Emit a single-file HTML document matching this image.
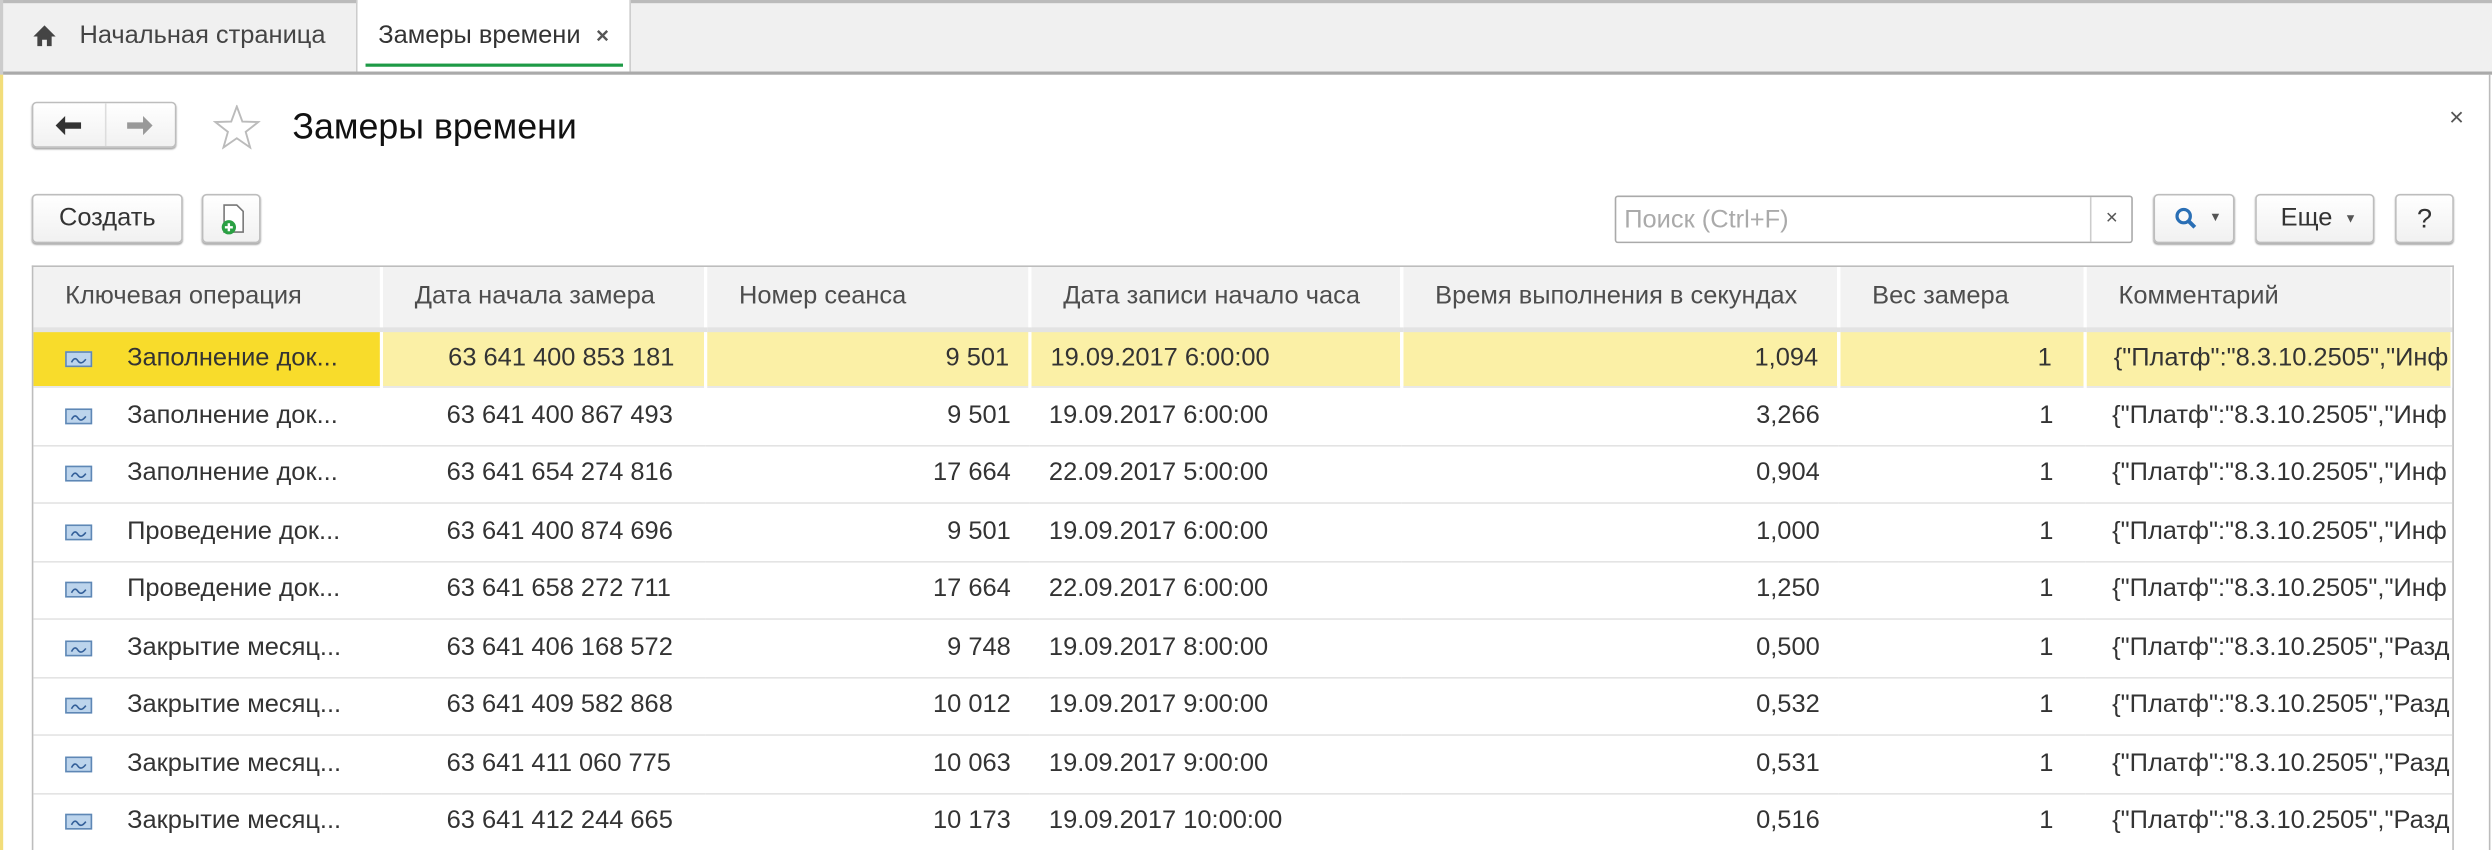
<!DOCTYPE html>
<html><head><meta charset="utf-8"><style>
*{margin:0;padding:0;box-sizing:border-box}
html,body{width:2492px;height:850px;overflow:hidden;background:#fff}
#w{position:absolute;left:0;top:0;width:1568px;height:535px;transform:scale(1.58929);transform-origin:0 0;font-family:"Liberation Sans",sans-serif;color:#333}
.abs{position:absolute}
.tabbar{left:0;top:0;width:1568px;height:47px;background:#f0f0f0;border-top:2px solid #bbb;border-bottom:2px solid #aaa}
.tab{top:0;height:45px;font-size:16px;line-height:45px;color:#444}
.btn{border:1px solid #bdbdbd;border-radius:3px;background:linear-gradient(#fff,#f1f1f1);box-shadow:0 1px 1px #aaa}
table{border-collapse:collapse;table-layout:fixed;font-size:16px}
td{height:36.5px;border-bottom:1px solid #e3e3e3;white-space:nowrap;overflow:hidden;padding:0 12px}
th{height:39px;background:#f2f2f2;font-weight:normal;text-align:left;color:#4d4d4d;padding:0 20px;border-right:2px solid #fff;border-bottom:3px solid #e3e3e3;white-space:nowrap;overflow:hidden}
.r{text-align:right}
tr.sel td{background:#fbf0a6;border-right:2px solid #fff}
tr.sel td.f{background:#f8dc2b}
.ic{display:inline-block;width:17px;height:10px;border:1px solid #5e87b5;background:#bcd4ec;vertical-align:middle;margin:0 22px 0 8px;position:relative}
.ic svg{position:absolute;left:2px;top:1px}
</style></head><body><div id="w">
<div class="abs tabbar"></div>
<div class="abs" style="left:0;top:0;width:2px;height:47px;background:#ccc"></div>
<div class="abs tab" style="left:4px;width:221px;border-right:1px solid #ccc">
<svg class="abs" style="left:16px;top:15px" width="16" height="15" viewBox="0 0 16 15"><path d="M8 1 L15 8 H12.5 V14 H9.5 V10 H6.5 V14 H3.5 V8 H1 Z" fill="#444"/></svg>
<span class="abs" style="left:46px">Начальная страница</span></div>
<div class="abs tab" style="left:225px;width:172px;background:#fff;height:45px;border-right:1px solid #ccc;color:#333"><span class="abs" style="left:13px">Замеры времени</span><span class="abs" style="left:150px;font-size:14px;font-weight:bold;color:#555">×</span>
<div class="abs" style="left:5px;top:40px;width:162px;height:2px;background:#1e9a46"></div></div>
<div class="abs" style="left:0;top:47px;width:2px;height:488px;background:#f2dd7a"></div>
<div class="abs" style="right:1px;top:47px;width:1px;height:488px;background:#bbb"></div>
<div class="abs btn" style="left:20px;top:64px;width:91px;height:29px"><div class="abs" style="left:45px;top:0;width:1px;height:27px;background:#ddd"></div>
<svg class="abs" style="left:13px;top:7px" width="18" height="14"><path d="M1 7 L7 1 V5 H17 V9 H7 V13 Z" fill="#333"/></svg>
<svg class="abs" style="left:58px;top:7px" width="18" height="14"><path d="M17 7 L11 1 V5 H1 V9 H11 V13 Z" fill="#999"/></svg></div>
<svg class="abs" style="left:134px;top:66px" width="30" height="28" viewBox="0 0 30 28"><path d="M15 1 L18.5 10.5 L28.5 10.8 L20.6 17 L23.4 26.8 L15 21 L6.6 26.8 L9.4 17 L1.5 10.8 L11.5 10.5 Z" fill="none" stroke="#bbb" stroke-width="1.2"/></svg>
<div class="abs" style="left:184px;top:67px;font-size:22.5px;color:#111">Замеры времени</div>
<div class="abs" style="left:1541px;top:66px;font-size:16px;color:#555">×</div>
<div class="abs btn" style="left:20px;top:122px;width:95px;height:31px;font-size:16px;line-height:29px;text-align:center">Создать</div>
<div class="abs btn" style="left:127px;top:122px;width:37px;height:31px">
<svg class="abs" style="left:10px;top:5px" width="18" height="20"><path d="M3 1 H11 L15 5 V18 H3 Z" fill="#fff" stroke="#777"/><circle cx="6" cy="15" r="4.5" fill="#2aa043"/><path d="M6 12.5 V17.5 M3.5 15 H8.5" stroke="#fff" stroke-width="1.5"/></svg></div>
<div class="abs" style="left:1016px;top:123px;width:326px;height:30px;border:1px solid #aaa;border-radius:2px;background:#fff">
<span class="abs" style="left:5px;top:6px;font-size:16px;color:#aaa">Поиск (Ctrl+F)</span>
<div class="abs" style="left:298px;top:0;width:1px;height:28px;background:#ccc"></div>
<span class="abs" style="left:308px;top:5px;font-size:13px;color:#555">×</span></div>
<div class="abs btn" style="left:1355px;top:122px;width:51px;height:31px">
<svg class="abs" style="left:12px;top:7px" width="16" height="16"><circle cx="6" cy="6" r="4.2" fill="none" stroke="#2a6fb5" stroke-width="2"/><path d="M9 9 L13 13" stroke="#2a6fb5" stroke-width="2.5"/></svg>
<span class="abs" style="left:34px;top:9px;font-size:8px;color:#555">▼</span></div>
<div class="abs btn" style="left:1419px;top:122px;width:75px;height:31px;font-size:16px;line-height:29px"><span class="abs" style="left:15px">Еще</span><span class="abs" style="left:55px;font-size:8px;color:#555">▼</span></div>
<div class="abs btn" style="left:1507px;top:122px;width:37px;height:31px;font-size:17px;line-height:29px;text-align:center">?</div>
<div class="abs" style="left:20px;top:167px;width:1524px;height:368px;border:1px solid #bdbdbd;border-bottom:none;overflow:hidden">
<table style="width:1522px">
<colgroup><col style="width:219px"><col style="width:204px"><col style="width:204px"><col style="width:234px"><col style="width:275px"><col style="width:155px"><col style="width:231px"></colgroup>
<tr><th>Ключевая операция</th><th>Дата начала замера</th><th>Номер сеанса</th><th>Дата записи начало часа</th><th>Время выполнения в секундах</th><th>Вес замера</th><th>Комментарий</th></tr>
<tr class="sel"><td class="f" style="padding:0 0 0 12px"><span class="ic"><svg width="12" height="7"><path d="M1 5 Q3 1 5 4 T10 3" fill="none" stroke="#335f99" stroke-width="1"/></svg></span>Заполнение док...</td><td style="padding-left:41px">63 641 400 853 181</td><td class="r">9 501</td><td>19.09.2017 6:00:00</td><td class="r">1,094</td><td class="r" style="padding-right:20px">1</td><td style="padding-left:17px">{"Платф":"8.3.10.2505","Инф</td></tr>
<tr><td style="padding:0 0 0 12px"><span class="ic"><svg width="12" height="7"><path d="M1 5 Q3 1 5 4 T10 3" fill="none" stroke="#335f99" stroke-width="1"/></svg></span>Заполнение док...</td><td style="padding-left:41px">63 641 400 867 493</td><td class="r">9 501</td><td>19.09.2017 6:00:00</td><td class="r">3,266</td><td class="r" style="padding-right:20px">1</td><td style="padding-left:17px">{"Платф":"8.3.10.2505","Инф</td></tr>
<tr><td style="padding:0 0 0 12px"><span class="ic"><svg width="12" height="7"><path d="M1 5 Q3 1 5 4 T10 3" fill="none" stroke="#335f99" stroke-width="1"/></svg></span>Заполнение док...</td><td style="padding-left:41px">63 641 654 274 816</td><td class="r">17 664</td><td>22.09.2017 5:00:00</td><td class="r">0,904</td><td class="r" style="padding-right:20px">1</td><td style="padding-left:17px">{"Платф":"8.3.10.2505","Инф</td></tr>
<tr><td style="padding:0 0 0 12px"><span class="ic"><svg width="12" height="7"><path d="M1 5 Q3 1 5 4 T10 3" fill="none" stroke="#335f99" stroke-width="1"/></svg></span>Проведение док...</td><td style="padding-left:41px">63 641 400 874 696</td><td class="r">9 501</td><td>19.09.2017 6:00:00</td><td class="r">1,000</td><td class="r" style="padding-right:20px">1</td><td style="padding-left:17px">{"Платф":"8.3.10.2505","Инф</td></tr>
<tr><td style="padding:0 0 0 12px"><span class="ic"><svg width="12" height="7"><path d="M1 5 Q3 1 5 4 T10 3" fill="none" stroke="#335f99" stroke-width="1"/></svg></span>Проведение док...</td><td style="padding-left:41px">63 641 658 272 711</td><td class="r">17 664</td><td>22.09.2017 6:00:00</td><td class="r">1,250</td><td class="r" style="padding-right:20px">1</td><td style="padding-left:17px">{"Платф":"8.3.10.2505","Инф</td></tr>
<tr><td style="padding:0 0 0 12px"><span class="ic"><svg width="12" height="7"><path d="M1 5 Q3 1 5 4 T10 3" fill="none" stroke="#335f99" stroke-width="1"/></svg></span>Закрытие месяц...</td><td style="padding-left:41px">63 641 406 168 572</td><td class="r">9 748</td><td>19.09.2017 8:00:00</td><td class="r">0,500</td><td class="r" style="padding-right:20px">1</td><td style="padding-left:17px">{"Платф":"8.3.10.2505","Разд</td></tr>
<tr><td style="padding:0 0 0 12px"><span class="ic"><svg width="12" height="7"><path d="M1 5 Q3 1 5 4 T10 3" fill="none" stroke="#335f99" stroke-width="1"/></svg></span>Закрытие месяц...</td><td style="padding-left:41px">63 641 409 582 868</td><td class="r">10 012</td><td>19.09.2017 9:00:00</td><td class="r">0,532</td><td class="r" style="padding-right:20px">1</td><td style="padding-left:17px">{"Платф":"8.3.10.2505","Разд</td></tr>
<tr><td style="padding:0 0 0 12px"><span class="ic"><svg width="12" height="7"><path d="M1 5 Q3 1 5 4 T10 3" fill="none" stroke="#335f99" stroke-width="1"/></svg></span>Закрытие месяц...</td><td style="padding-left:41px">63 641 411 060 775</td><td class="r">10 063</td><td>19.09.2017 9:00:00</td><td class="r">0,531</td><td class="r" style="padding-right:20px">1</td><td style="padding-left:17px">{"Платф":"8.3.10.2505","Разд</td></tr>
<tr><td style="padding:0 0 0 12px"><span class="ic"><svg width="12" height="7"><path d="M1 5 Q3 1 5 4 T10 3" fill="none" stroke="#335f99" stroke-width="1"/></svg></span>Закрытие месяц...</td><td style="padding-left:41px">63 641 412 244 665</td><td class="r">10 173</td><td>19.09.2017 10:00:00</td><td class="r">0,516</td><td class="r" style="padding-right:20px">1</td><td style="padding-left:17px">{"Платф":"8.3.10.2505","Разд</td></tr>
</table></div>
</div></body></html>
